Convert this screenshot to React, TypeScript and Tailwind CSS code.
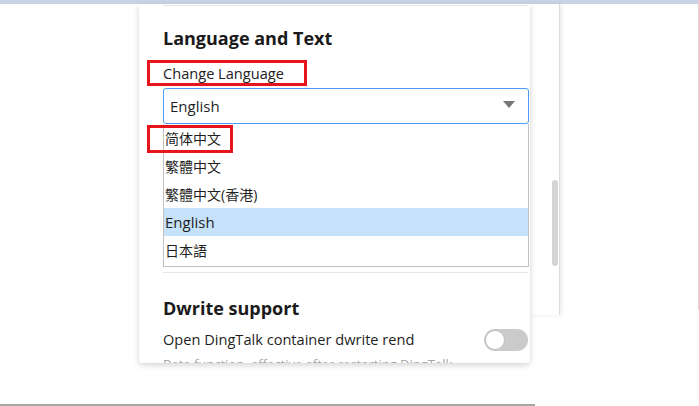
import React from "react";

const font = { fontFamily: '"Open Sans", "Noto Sans CJK SC", sans-serif' };

export default function App() {
  const items = ["简体中文", "繁體中文", "繁體中文(香港)", "English", "日本語"];
  return (
    <div className="relative w-[699px] h-[406px] overflow-hidden bg-white text-[#1f1f1f]" style={font}>
      <div className="h-[4px] w-full bg-[#c9d3e6]" />
      <div className="flex">
        <div className="ml-[139px] flex items-start">
          <div className="relative z-10 w-[391px] h-[359px] overflow-hidden rounded-b-[4px] bg-white shadow-[0_2px_6px_rgba(0,0,0,0.18)]">
            <div className="ml-[24px] w-[365px] h-px mt-[1px] bg-[#e6e6e6]" />
            <div className="pl-[24px]">
              <div className="mt-[20px] h-[24px] text-[18px] leading-[24px] font-bold text-[#1a1a1a]">Language and Text</div>
              <div className="mt-[10px] -ml-[16px] w-[160px] h-[26px] border-[3px] border-[#e8141c] pl-[13px] text-[14.6px] leading-[20px] text-[#222]">
                Change Language
              </div>
              <div className="mt-[2px] w-[366px] h-[36px] flex items-center justify-between rounded-[3px] border border-[#4a9df2] pl-[6px] pr-[13px] text-[15px]">
                <span>English</span>
                <svg width="12" height="8" viewBox="0 0 12 8" className="-mt-[2px]">
                  <path d="M0 0 L12 0 L6 7 Z" fill="#777" />
                </svg>
              </div>
              <div className="relative w-[366px] h-[143px] border border-t-0 border-[#c2c2c2] bg-white">
                {items.map((t, i) => (
                  <div
                    key={t}
                    className={
                      "h-[28px] flex items-center pl-[1px] text-[14px] " +
                      (i === 3 ? "bg-[#c6e2fb] text-[15px]" : "")
                    }
                  >
                    {t}
                  </div>
                ))}
                <div className="absolute left-[-17px] top-[1px] w-[86px] h-[28px] border-[3px] border-[#e8141c]" />
              </div>
              <div className="mt-[5px] w-[365px] h-px bg-[#e6e6e6]" />
              <div className="mt-[23px] h-[24px] text-[18px] leading-[24px] font-bold text-[#1a1a1a]">Dwrite support</div>
              <div className="mt-[9px] w-[365px] h-[22px] flex items-center justify-between">
                <span className="text-[14.6px]">Open DingTalk container dwrite rend</span>
                <div className="relative w-[44px] h-[22px] rounded-full bg-[#cbcbcb]">
                  <div className="absolute left-[1px] top-[1px] w-[20px] h-[20px] rounded-full bg-white border border-[#bdbdbd]" />
                </div>
              </div>
              <div className="mt-[4px] text-[13px] leading-[18px] text-[#a8a8a8]">Beta function, effective after restarting DingTalk</div>
            </div>
          </div>
          <div className="w-[30px] h-[311px] flex justify-end bg-white border-r border-[#dcdcdc] shadow-[2px_0_4px_rgba(0,0,0,0.08)]">
            <div className="mt-[176px] mr-[1px] w-[6px] h-[86px] rounded-[3px] bg-[#d4d4d4]" />
          </div>
        </div>
      </div>
      <div className="absolute right-0 top-0 w-px h-[310px] bg-[#d8d8d8]" />
      <div className="absolute left-0 bottom-0 w-[535px] h-[2px] bg-[#a6a6a6]" />
    </div>
  );
}
